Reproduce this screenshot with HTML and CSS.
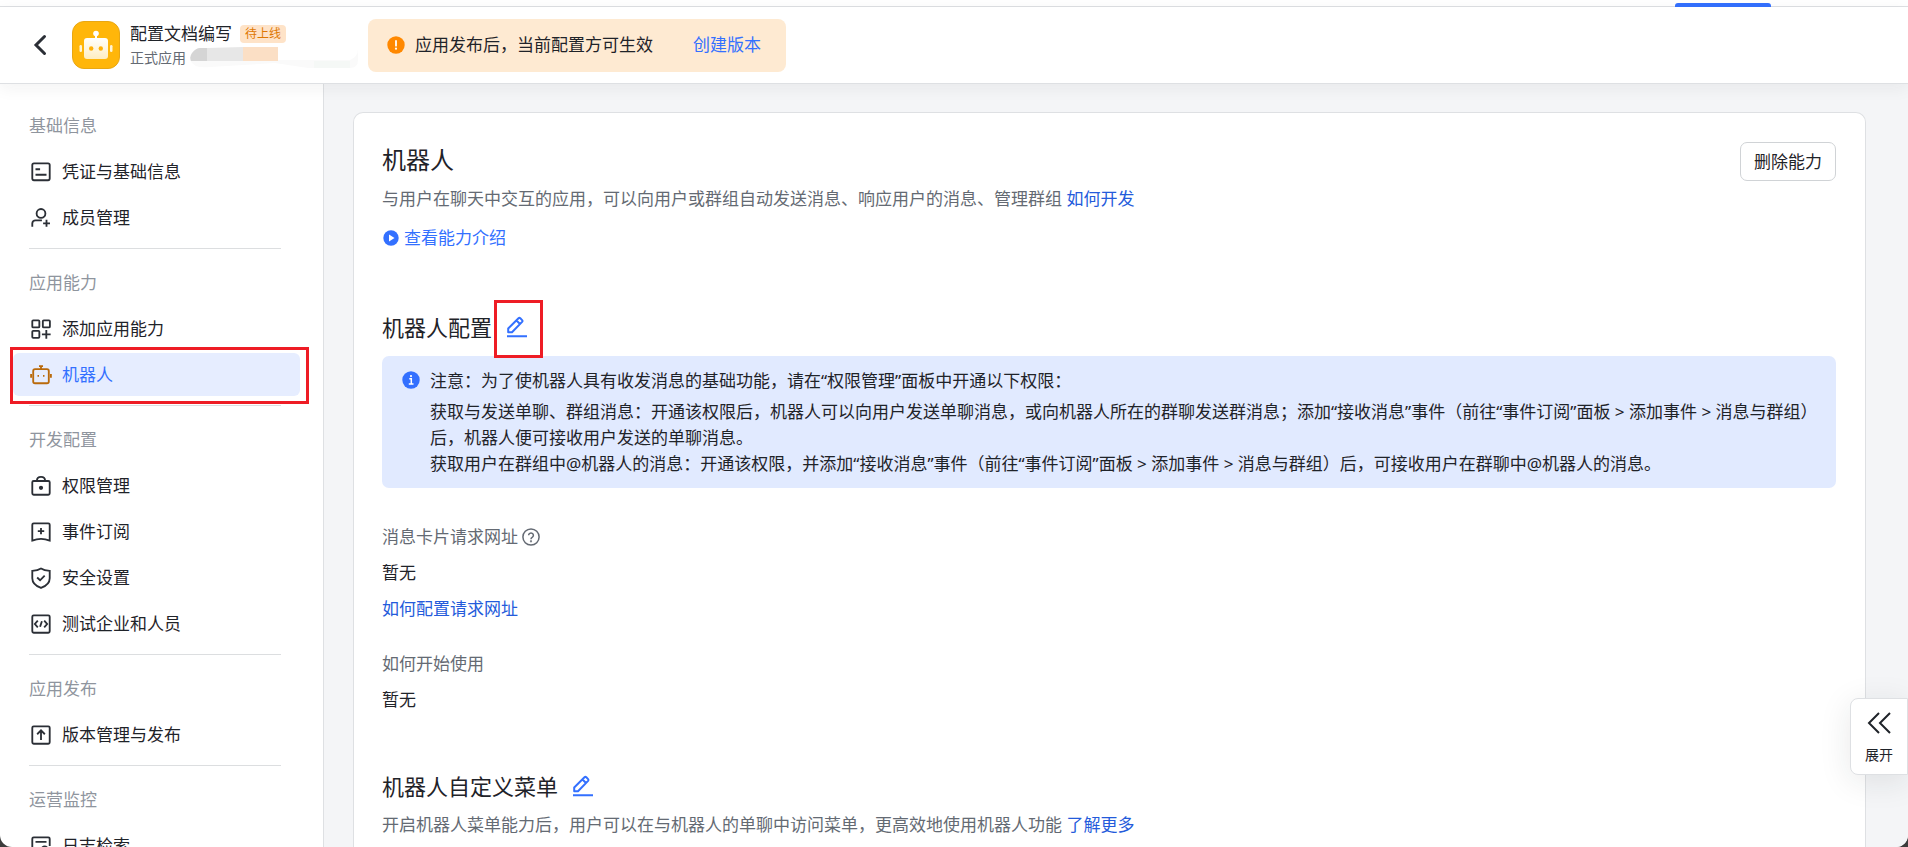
FILE: index.html
```html
<!DOCTYPE html>
<html lang="zh-CN">
<head>
<meta charset="utf-8">
<meta name="viewport" content="width=device-width, initial-scale=1">
<title>配置文档编写 - 机器人</title>
<link rel="stylesheet" href="styles.css">
</head>
<body>
<div class="window">
  <div class="tabstrip"><span class="tabstrip-active"></span></div>

  <header class="header">
    <button class="back" type="button" aria-label="返回">
      <svg width="24" height="24" viewBox="0 0 24 24" fill="none" stroke="#2b2f36" stroke-width="3"><path d="M16.5 3.5 8 12l8.500 8.500" stroke-linecap="round"/></svg>
    </button>
    <svg class="app-logo" width="48" height="48" viewBox="0 0 48 48">
      <defs><linearGradient id="robot" x1="0" y1="0" x2="0" y2="1"><stop offset="0" stop-color="#fff"/><stop offset="1" stop-color="#ffedc0"/></linearGradient></defs>
      <rect x=".5" y=".5" width="47" height="47" rx="11.500" fill="#ffb60a" stroke="#e8a713"/>
      <circle cx="24" cy="12.500" r="2.800" fill="#fff"/>
      <path d="M23 13h2v5h-2z" fill="#fff"/>
      <rect x="12" y="17" width="24" height="21" rx="3" fill="url(#robot)"/>
      <rect x="7.500" y="24" width="2.500" height="7" rx="1.200" fill="#fff3d5"/>
      <rect x="38" y="24" width="2.500" height="7" rx="1.200" fill="#fff3d5"/>
      <circle cx="19.200" cy="27.500" r="2.200" fill="#ffb10a"/><circle cx="28.800" cy="27.500" r="2.200" fill="#ffb10a"/>
    </svg>
    <div class="app-info">
      <div class="app-line"><span class="app-name">配置文档编写</span><span class="tag">待上线</span></div>
      <div class="app-line app-sub"><span>正式应用</span>
        <svg width="168" height="22" viewBox="0 0 168 22" aria-hidden="true">
          <path d="M0 13h160q8-3 8-11v11q0 8-8 8h-42L85 16 20 20Q4 22 0 13z" fill="#fafafa"/>
          <path d="M124 14h36v7h-36z" fill="#f5f8f6"/>
          <path d="M17 1v13H1q-2-4 1-8 4-5 8-5z" fill="#d5d5d5"/>
          <path d="M17 1l36-1v14H17z" fill="#e7e7e7"/>
          <path d="M53 0h35v14H53z" fill="#fbdfc5"/>
        </svg>
      </div>
    </div>
    <div class="notice">
      <svg width="18" height="18" viewBox="0 0 18 18"><circle cx="9" cy="9" r="8.700" fill="#ff8800"/><path d="M9 5v4.700" stroke="#fff" stroke-width="1.800" stroke-linecap="round"/><circle cx="9" cy="12.700" r="1.100" fill="#fff"/></svg>
      <span class="notice-text">应用发布后，当前配置方可生效</span>
      <a class="link-bright" href="#">创建版本</a>
    </div>
  </header>

  <div class="layout">
    <nav class="sidebar">
      <section class="group">
        <h2 class="group-title">基础信息</h2>
        <a class="item" href="#"><svg class="icon" viewBox="0 0 24 24"><rect x="2.500" y="2.500" width="19" height="18.500" rx="1.800"/><path d="M6 9h5M6 15h12"/></svg>凭证与基础信息</a>
        <a class="item" href="#"><svg class="icon" viewBox="0 0 24 24"><circle cx="12" cy="7" r="4.800"/><path d="M2.500 21.500V18a3.500 3.500 0 0 1 3.500-3.500h7M18 14v7.500M14.300 17.800h7.500"/></svg>成员管理</a>
      </section>
      <section class="group">
        <h2 class="group-title">应用能力</h2>
        <a class="item" href="#"><svg class="icon" viewBox="0 0 24 24"><rect x="2.500" y="2.500" width="7.700" height="7.700" rx="1"/><rect x="14" y="2.500" width="7.700" height="7.700" rx="1"/><rect x="2.500" y="14" width="7.700" height="7.700" rx="1"/><path d="M17.800 13v9.500M13 17.800h9.500"/></svg>添加应用能力</a>
        <a class="item item-active" href="#"><svg class="icon icon-robot" viewBox="0 0 24 24"><rect x="3.500" y="5.500" width="17" height="15.500" rx="2"/><path d="M9.800 2.300h4.400M12 2.500V5.500M1.200 11v4M22.800 11v4"/><path d="M8.200 13h1.600M14.200 13h1.600"/></svg>机器人</a>
      </section>
      <section class="group">
        <h2 class="group-title">开发配置</h2>
        <a class="item" href="#"><svg class="icon" viewBox="0 0 24 24"><rect x="2.500" y="6.500" width="19" height="15" rx="1.500"/><path d="M7.500 6.500C7.500 3.500 9 2 12 2s4.500 1.500 4.500 4.500"/><circle cx="12" cy="14" r="1.300" fill="currentColor"/></svg>权限管理</a>
        <a class="item" href="#"><svg class="icon" viewBox="0 0 24 24"><path d="M4 2.500h16A1.500 1.500 0 0 1 21.500 4v17.300q-9.500-3.600-19 0V4A1.500 1.500 0 0 1 4 2.500zM12 7.500v7M8.500 11h7"/></svg>事件订阅</a>
        <a class="item" href="#"><svg class="icon" viewBox="0 0 24 24"><path d="M12 1.700c2.500 1.600 5.700 2.300 9.500 2.500v8c0 5-4 8.600-9.500 10.600-5.500-2-9.500-5.600-9.500-10.600v-8C6.300 4 9.500 3.300 12 1.700zM7.800 11.500l3.200 3 5-5"/></svg>安全设置</a>
        <a class="item" href="#"><svg class="icon" viewBox="0 0 24 24"><rect x="2.500" y="2.500" width="19" height="19" rx="1.500"/><path d="M8.500 8.300 5.300 12l3.200 3.700M15.500 8.300l3.200 3.700-3.200 3.700M13 9l-2 6"/></svg>测试企业和人员</a>
      </section>
      <section class="group">
        <h2 class="group-title">应用发布</h2>
        <a class="item" href="#"><svg class="icon" viewBox="0 0 24 24"><rect x="2.500" y="2.500" width="19" height="19" rx="1.500"/><path d="M12 17.500V7.500M7.800 11.200 12 7l4.200 4.200"/></svg>版本管理与发布</a>
      </section>
      <section class="group">
        <h2 class="group-title">运营监控</h2>
        <a class="item" href="#"><svg class="icon" viewBox="0 0 24 24"><path d="M11 21.500H4A1.500 1.500 0 0 1 2.500 20V4A1.500 1.500 0 0 1 4 2.500h16A1.500 1.500 0 0 1 21.500 4v8M6 7.500h12"/><circle cx="16" cy="16" r="3.500"/><path d="m18.500 18.500 3 3"/></svg>日志检索</a>
      </section>
    </nav>

    <main class="content">
      <article class="card">
        <div class="card-head">
          <div>
            <h1 class="title">机器人</h1>
            <p class="desc">与用户在聊天中交互的应用，可以向用户或群组自动发送消息、响应用户的消息、管理群组 <a class="link" href="#">如何开发</a></p>
            <a class="intro link-bright" href="#"><svg width="16" height="16" viewBox="0 0 16 16"><circle cx="8" cy="8" r="7.700" fill="#3370ff"/><path d="M6 4.500v7L11.500 8z" fill="#fff"/></svg>查看能力介绍</a>
          </div>
          <button class="delete" type="button">删除能力</button>
        </div>

        <div class="section-head">
          <h2 class="section-title">机器人配置</h2>
          <button class="edit edit-marked" type="button" aria-label="编辑机器人配置"><svg width="22" height="22" viewBox="0 0 22 22" fill="none" stroke="#3370ff" stroke-width="2" stroke-linejoin="round"><path d="M2.200 16.200v-3.700L12.500 2.300q.9-.8 1.800 0l1.800 1.800q.8.900 0 1.800L6 16.200zM10.500 4.500l3.500 3.500M1 20.300h20"/></svg></button>
        </div>
        <div class="alert">
          <svg class="alert-icon" width="18" height="18" viewBox="0 0 18 18"><circle cx="9" cy="9" r="8.700" fill="#3370ff"/><path d="M7.300 7.700h2v5M6.800 12.900h4.700" fill="none" stroke="#fff" stroke-width="1.500"/><circle cx="9" cy="5.100" r="1.100" fill="#fff"/></svg>
          <div>
            <p class="alert-title">注意：为了使机器人具有收发消息的基础功能，请在“权限管理”面板中开通以下权限：</p>
            <p>获取与发送单聊、群组消息：开通该权限后，机器人可以向用户发送单聊消息，或向机器人所在的群聊发送群消息；添加“接收消息”事件（前往“事件订阅”面板 &gt; 添加事件 &gt; 消息与群组）后，机器人便可接收用户发送的单聊消息。</p>
            <p>获取用户在群组中@机器人的消息：开通该权限，并添加“接收消息”事件（前往“事件订阅”面板 &gt; 添加事件 &gt; 消息与群组）后，可接收用户在群聊中@机器人的消息。</p>
          </div>
        </div>

        <dl class="fields">
          <div class="field">
            <dt>消息卡片请求网址<svg width="18" height="18" viewBox="0 0 18 18" fill="none" stroke="#646a73" stroke-width="1.500"><circle cx="9" cy="9" r="8.100"/><path d="M6.600 7.300a2.400 2.300 0 1 1 3.600 2Q9 10 9 11.200"/><circle cx="9" cy="13.300" r=".4"/></svg></dt>
            <dd>暂无</dd>
            <dd><a class="link" href="#">如何配置请求网址</a></dd>
          </div>
          <div class="field">
            <dt>如何开始使用</dt>
            <dd>暂无</dd>
          </div>
        </dl>

        <div class="section-head section-menu">
          <h2 class="section-title">机器人自定义菜单</h2>
          <button class="edit" type="button" aria-label="编辑机器人自定义菜单"><svg width="22" height="22" viewBox="0 0 22 22" fill="none" stroke="#3370ff" stroke-width="2" stroke-linejoin="round"><path d="M2.200 16.200v-3.700L12.500 2.300q.9-.8 1.800 0l1.800 1.800q.8.900 0 1.800L6 16.200zM10.500 4.500l3.500 3.500M1 20.300h20"/></svg></button>
        </div>
        <p class="desc">开启机器人菜单能力后，用户可以在与机器人的单聊中访问菜单，更高效地使用机器人功能 <a class="link" href="#">了解更多</a></p>
      </article>
    </main>
  </div>

  <button class="expand" type="button">
    <svg width="24" height="24" viewBox="0 0 24 24" fill="none" stroke="#1f2329" stroke-width="2"><path d="M12 2 2 12l10 10M23 2 13 12l10 10"/></svg>
    展开
  </button>
</div>
</body>
</html>
```

FILE: styles.css
```css
* { box-sizing: border-box; }

body {
  margin: 0;
  background: #3c3c3c;
  color: #1f2329;
  font: 17px/26px "Noto Sans", "Noto Sans CJK SC", sans-serif;
}

h1, h2, p, dl, dd { margin: 0; font-weight: 400; }
a { text-decoration: none; color: inherit; }
button { font: inherit; color: inherit; border: 0; background: none; padding: 0; }
svg { display: block; flex: none; }

.window {
  position: relative;
  display: flex;
  flex-direction: column;
  height: 100vh;
  overflow: hidden;
  background: #fff;
  border-radius: 0 0 12px 12px;
}

.tabstrip {
  display: flex;
  flex: none;
  justify-content: flex-end;
  align-items: flex-end;
  height: 7px;
  padding-right: 137px;
  box-shadow: inset 0 -1px #dee0e3;
}
.tabstrip-active {
  width: 96px;
  height: 4px;
  border-radius: 3px 3px 0 0;
  background: #3370ff;
}

.header {
  position: relative;
  z-index: 1;
  display: flex;
  flex: none;
  align-items: center;
  height: 77px;
  padding-left: 28px;
  border-bottom: 1px solid #dee0e3;
  background: #fff;
  box-shadow: 0 4px 16px rgba(31, 35, 41, .06);
}
.back { margin-right: 20px; }
.app-info { width: 238px; margin-left: 10px; padding-top: 2px; }
.app-line { display: flex; align-items: center; height: 24px; white-space: nowrap; }
.tag {
  margin-left: 8px;
  padding: 0 5px;
  border-radius: 4px;
  background: #fee3c8;
  color: #de7802;
  font-size: 12px;
  line-height: 18px;
}
.app-sub { gap: 4px; color: #646a73; font-size: 14px; }

.notice {
  display: flex;
  align-items: center;
  height: 53px;
  padding: 0 25px 0 19px;
  border-radius: 8px;
  background: #feead2;
}
.notice-text { margin: 0 40px 0 10px; }
.link { color: #245bdb; }
.link-bright { color: #3370ff; }

.layout { display: flex; flex: 1; min-height: 0; }

.sidebar {
  flex: none;
  width: 324px;
  padding: 29px 23px 0 13px;
  border-right: 1px solid #dee0e3;
  overflow: hidden;
}
.group { display: flex; flex-direction: column; gap: 3px; margin-bottom: 21px; }
.group::after {
  content: "";
  height: 1px;
  margin: 6px 19px 0 16px;
  background: #dcdee0;
}
.group-title {
  margin: 0 16px 8px;
  color: #8f959e;
  font-size: 17px;
}
.item {
  position: relative;
  display: flex;
  align-items: center;
  gap: 10px;
  height: 43px;
  padding-left: 17px;
  border-radius: 6px;
}
.icon {
  width: 22px;
  height: 22px;
  fill: none;
  stroke: #2b2f36;
  stroke-width: 2;
}
.item-active { background: #e6edff; color: #3370ff; }
.icon-robot { stroke: #b96a0c; }

/* Highlight frames around the entry and the edit button */
.item-active::before,
.edit-marked::before {
  content: "";
  position: absolute;
  border: 3px solid #ee1c25;
}
.item-active::before { inset: -6px -9px -8px -3px; }
.edit-marked::before { inset: -16px -15px -20px -12px; }

.content {
  flex: 1;
  min-width: 0;
  padding: 28px 42px 0 29px;
  background: #f4f5f7;
}
.card {
  min-height: 100%;
  padding: 29px 29px 0 28px;
  border: 1px solid #dee0e3;
  border-bottom: 0;
  border-radius: 10px 10px 0 0;
  background: #fff;
}
.card-head {
  display: flex;
  justify-content: space-between;
  align-items: flex-start;
}
.title { font-size: 24px; line-height: 36px; }
.desc { color: #646a73; }
.card-head .desc { margin: 8px 0 13px; }
.intro { display: flex; align-items: center; gap: 5px; width: fit-content; padding-left: 1px; }
.delete {
  flex: none;
  width: 96px;
  height: 39px;
  border: 1px solid #d0d3d6;
  border-radius: 7px;
}

.section-head { display: flex; align-items: center; gap: 14px; margin: 60px 0 13px; }
.section-title { font-size: 22px; line-height: 32px; }
.edit { position: relative; }

.alert {
  display: flex;
  gap: 10px;
  padding: 12px 14px 11px 20px;
  border-radius: 7px;
  background: #e1eaff;
}
.alert-icon { margin-top: 3px; }
.alert-title { margin-bottom: 5px; }

.fields { display: grid; gap: 29px; margin-top: 36px; }
.field { display: grid; gap: 10px; color: #1f2329; }
.field dt { display: flex; align-items: center; gap: 4px; color: #646a73; }

.section-menu { margin: 57px 0 10px; }

.expand {
  position: absolute;
  right: 0;
  bottom: 72px;
  z-index: 2;
  display: flex;
  flex-direction: column;
  align-items: center;
  gap: 7px;
  padding: 12px 14px 6px;
  border: 1px solid #dee0e3;
  border-radius: 8px 0 0 8px;
  background: #fff;
  box-shadow: 0 6px 32px rgba(31, 35, 41, .1);
  font-size: 14px;
}
```
